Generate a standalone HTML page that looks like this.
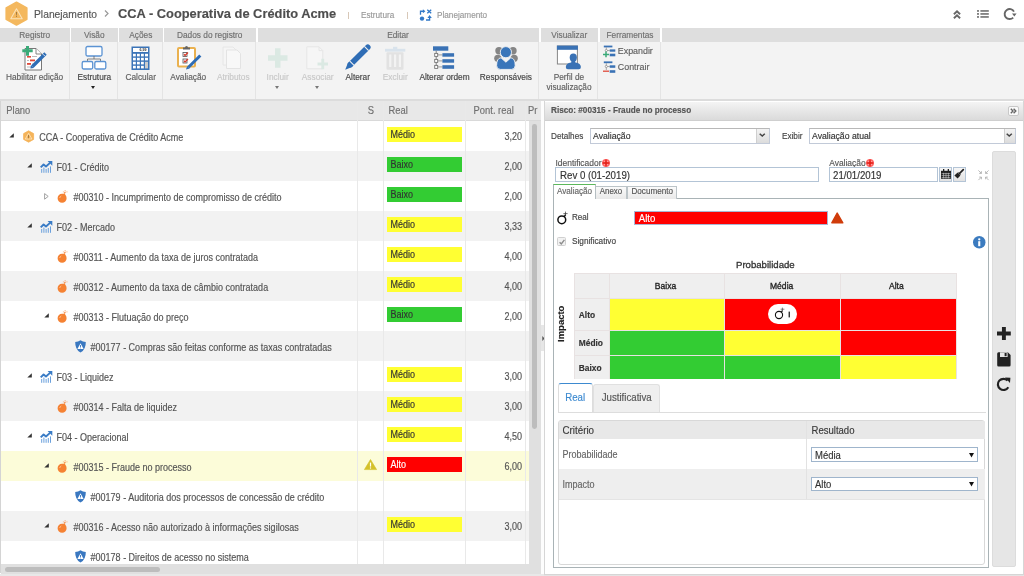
<!DOCTYPE html>
<html><head><meta charset="utf-8">
<style>
*{box-sizing:border-box;margin:0;padding:0}
html,body{width:1024px;height:576px;overflow:hidden;background:#fff;font-family:"Liberation Sans",sans-serif;color:#555}
body{will-change:transform}
.t,.tt,.lbl,.rh,.bdg{-webkit-text-stroke:0.15px currentColor}
.a{position:absolute}
.t{position:absolute;white-space:nowrap;line-height:1;transform:scaleY(1.12);transform-origin:0 85%}
.tt{transform:scaleY(1.12);transform-origin:0 85%}
.lbl{transform:scaleY(1.12);transform-origin:0 85%}
.bdg span,.rh span{display:inline-block;transform:scaleY(1.12);transform-origin:0 85%}
svg{position:absolute;overflow:visible}
/* ribbon */
.rh{position:absolute;top:28px;height:14px;background:#dedede;color:#6f6f6f;font-size:8.3px;text-align:center;line-height:14px}
.rb{position:absolute;top:42px;height:57px;background:#f3f3f3}
.sep{position:absolute;top:42px;height:57px;width:1px;background:#e4e4e4}
.lbl{position:absolute;font-size:8.3px;margin-top:-0.6px;color:#5e5e5e;white-space:nowrap;line-height:1;text-align:center}
.dis{color:#c8c8c8}
.dd{position:absolute;width:0;height:0;border-left:2.5px solid transparent;border-right:2.5px solid transparent;border-top:3px solid #222}
/* tree */
.row{position:absolute;left:1px;width:528px;height:30px}
.cl{position:absolute;top:101px;width:1px;height:463px;background:#e6e6e6}
.tt{position:absolute;font-size:9px;color:#545454;white-space:nowrap;line-height:1}
.bdg{position:absolute;left:387.4px;width:74.6px;height:15px;font-size:9px;line-height:15px;padding-left:3px;padding-top:0.8px;color:#333}
.num{position:absolute;right:8px;font-size:9px;color:#555;line-height:1}
</style></head><body>

<!-- ===== TOP BAR ===== -->
<svg style="left:5px;top:1px" width="23" height="25" viewBox="0 0 23 25">
  <polygon points="11.5,1.2 21.8,7 21.8,18.2 11.5,24 1.2,18.2 1.2,7" fill="#f4b85e" stroke="#f4b85e" stroke-width="1.6" stroke-linejoin="round"/>
  <path d="M11.5 7.8 L17.2 17.8 L5.8 17.8 Z" fill="none" stroke="#fae2b8" stroke-width="1.1" stroke-linejoin="round"/>
  <rect x="11.05" y="11" width="0.9" height="2.8" fill="#9a7440"/>
  <rect x="11.05" y="14.6" width="0.9" height="1.3" fill="#9a7440"/>
</svg>
<div class="t" style="left:34px;top:10px;font-size:10.3px;color:#555;transform:scaleY(1.04)">Planejamento</div>
<svg style="left:104px;top:9.6px" width="5" height="7"><path d="M1 0.5 L4 3.5 L1 6.5" fill="none" stroke="#999" stroke-width="1.2"/></svg>
<div class="t" style="left:118px;top:8px;font-size:12.85px;font-weight:bold;color:#4e4e4e;transform:none">CCA - Cooperativa de Crédito Acme</div>
<div class="a" style="left:348px;top:12px;width:1px;height:7px;background:#d8c8b8"></div>
<div class="t" style="left:361px;top:12px;font-size:8.2px;color:#999">Estrutura</div>
<div class="a" style="left:407px;top:12px;width:1px;height:7px;background:#d8c8b8"></div>
<svg style="left:410px;top:5px" width="30" height="20" viewBox="0 0 30 20">
  <path d="M10.5 9.8 V6.25 H13.4" fill="none" stroke="#3078c8" stroke-width="1.3"/>
  <path d="M12.9 4.3 L15.4 6.25 L12.9 8.2 Z" fill="#3078c8"/>
  <path d="M17.3 4.7 L21.2 8.2 M21.2 4.7 L17.3 8.2" stroke="#3078c8" stroke-width="1.3"/>
  <circle cx="12" cy="13.6" r="2.2" fill="#3078c8"/>
  <path d="M16 15 H19.6 V12.2" fill="none" stroke="#3078c8" stroke-width="1.3"/>
  <path d="M17.4 12.9 L19.6 10.1 L21.8 12.9 Z" fill="#3078c8"/>
</svg>
<div class="t" style="left:437px;top:12px;font-size:8.2px;color:#999">Planejamento</div>
<!-- right icons -->
<svg style="left:953px;top:9.5px" width="8" height="9" viewBox="0 0 8 9">
  <path d="M0.9 4.3 L4 1.4 L7.1 4.3 M0.9 8.3 L4 5.4 L7.1 8.3" fill="none" stroke="#666" stroke-width="1.9"/>
</svg>
<svg style="left:977px;top:10px" width="12" height="8" viewBox="0 0 12 8">
  <rect x="0" y="0.2" width="2" height="1.5" fill="#666"/><rect x="3.4" y="0.2" width="8.4" height="1.5" fill="#666"/>
  <rect x="0" y="3.2" width="2" height="1.5" fill="#666"/><rect x="3.4" y="3.2" width="8.4" height="1.5" fill="#666"/>
  <rect x="0" y="6.2" width="2" height="1.5" fill="#666"/><rect x="3.4" y="6.2" width="8.4" height="1.5" fill="#666"/>
</svg>
<svg style="left:1003px;top:8px" width="14" height="12" viewBox="0 0 14 12">
  <path d="M11 3.6 A5 5 0 1 0 10.2 9.6" fill="none" stroke="#666" stroke-width="1.9"/>
  <path d="M9 5.4 L13.6 5.4 L11.3 8.4 Z" fill="#666"/>
</svg>

<!-- ===== RIBBON ===== -->
<div class="rb" style="left:0;width:1024px"></div>
<div class="rh" style="left:0;width:69.5px"><span>Registro</span></div>
<div class="rh" style="left:71px;width:46.5px"><span>Visão</span></div>
<div class="rh" style="left:119px;width:43.5px"><span>Ações</span></div>
<div class="rh" style="left:164px;width:91.5px"><span>Dados do registro</span></div>
<div class="rh" style="left:257.5px;width:281px"><span>Editar</span></div>
<div class="rh" style="left:541px;width:56.5px"><span>Visualizar</span></div>
<div class="rh" style="left:600px;width:60px"><span>Ferramentas</span></div>
<div class="rh" style="left:662px;width:362px"></div>
<div class="sep" style="left:69px"></div>
<div class="sep" style="left:117px"></div>
<div class="sep" style="left:162px"></div>
<div class="sep" style="left:255px"></div>
<div class="sep" style="left:538px"></div>
<div class="sep" style="left:597px"></div>
<div class="sep" style="left:660px"></div>
<div class="a" style="left:0;top:99px;width:1024px;height:2px;background:#dcdcdc"></div>

<!-- ribbon labels -->
<div class="lbl" style="left:6px;top:73.5px">Habilitar edição</div>
<div class="lbl" style="left:77.5px;top:73.5px;color:#444">Estrutura</div>
<div class="dd" style="left:90.8px;top:86px"></div>
<div class="lbl" style="left:125.5px;top:73.5px">Calcular</div>
<div class="lbl" style="left:170.3px;top:73.5px">Avaliação</div>
<div class="lbl dis" style="left:216.9px;top:73.5px">Atributos</div>
<div class="lbl dis" style="left:266.6px;top:73.5px">Incluir</div>
<div class="dd" style="left:274.5px;top:86px;border-top-color:#777"></div>
<div class="lbl dis" style="left:301.8px;top:73.5px">Associar</div>
<div class="dd" style="left:314.5px;top:86px;border-top-color:#777"></div>
<div class="lbl" style="left:345.5px;top:73.5px;color:#444">Alterar</div>
<div class="lbl dis" style="left:382.8px;top:73.5px">Excluir</div>
<div class="lbl" style="left:419.4px;top:73.5px;color:#444">Alterar ordem</div>
<div class="lbl" style="left:479.8px;top:73.5px;color:#444">Responsáveis</div>
<div class="lbl" style="left:546.4px;top:74.5px;width:45px;line-height:9.4px">Perfil de<br>visualização</div>
<div class="lbl" style="left:617.8px;top:47.2px;font-size:8.9px">Expandir</div>
<div class="lbl" style="left:617.8px;top:63.3px;font-size:8.9px">Contrair</div>

<!-- Habilitar edicao -->
<svg style="left:22px;top:45.5px" width="25" height="25" viewBox="0 0 25 25">
  <path d="M3 2.5 H14 L19.5 8 V24 H3 Z" fill="#fff" stroke="#777" stroke-width="1"/>
  <path d="M14 2.5 V8 H19.5" fill="#fff" stroke="#777" stroke-width="0.9"/>
  <rect x="5" y="10" width="4" height="1.6" fill="#e04a3a"/><rect x="10" y="10" width="5" height="1" fill="#bbb"/>
  <rect x="8" y="13.5" width="5" height="1.8" fill="#e04a3a"/><rect x="5" y="14" width="2" height="1" fill="#bbb"/>
  <rect x="5" y="17" width="4" height="1.8" fill="#e04a3a"/><rect x="10" y="17.5" width="4" height="1" fill="#bbb"/>
  <rect x="5" y="20.5" width="7" height="1" fill="#bbb"/>
  <path d="M0.3 4.8 H10.7 M5.5 0 V9.7" stroke="#3aaa78" stroke-width="3"/>
  <path d="M23.5 7.5 L10.5 20.5" stroke="#2f6db5" stroke-width="3.4"/>
  <path d="M22.6 6.6 L24.4 8.4" stroke="#fff" stroke-width="0.8" transform="translate(-1.6 1.6)"/>
  <path d="M9 19 L11.9 21.9 L8.4 22.6 Z" fill="#2f6db5"/>
</svg>
<!-- Estrutura -->
<svg style="left:81px;top:45px" width="26" height="25" viewBox="0 0 26 25">
  <rect x="5" y="1.5" width="16" height="9.5" rx="1.5" fill="#fff" stroke="#5b93d3" stroke-width="1.3"/>
  <path d="M13 11 V14 M6.5 16 V14 H19.5 V16" fill="none" stroke="#666" stroke-width="0.8"/>
  <rect x="1.2" y="16.5" width="10.5" height="7.5" rx="1.5" fill="#fff" stroke="#5b93d3" stroke-width="1.3"/>
  <rect x="13.8" y="16.5" width="11" height="7.5" rx="1.5" fill="#fff" stroke="#5b93d3" stroke-width="1.3"/>
</svg>
<!-- Calcular -->
<svg style="left:130.5px;top:45.5px" width="19" height="25" viewBox="0 0 19 25">
  <rect x="0.5" y="0.5" width="18" height="23.5" fill="#3b74b8"/>
  <rect x="2" y="2" width="15" height="4" fill="#fff"/>
  <text x="15.5" y="5.4" font-size="3.6" font-family="Liberation Sans" font-weight="bold" fill="#333" text-anchor="end">6,99</text>
  <g fill="#fff">
  <rect x="2" y="7.8" width="2.8" height="2.6"/><rect x="6" y="7.8" width="2.8" height="2.6"/><rect x="10" y="7.8" width="2.8" height="2.6"/><rect x="14" y="7.8" width="3" height="2.6"/>
  <rect x="2" y="11.8" width="2.8" height="2.6"/><rect x="6" y="11.8" width="2.8" height="2.6"/><rect x="10" y="11.8" width="2.8" height="2.6"/><rect x="14" y="11.8" width="3" height="2.6"/>
  <rect x="2" y="15.8" width="2.8" height="2.6"/><rect x="6" y="15.8" width="2.8" height="2.6"/><rect x="10" y="15.8" width="2.8" height="2.6"/>
  <rect x="2" y="19.8" width="2.8" height="2.6"/><rect x="6" y="19.8" width="2.8" height="2.6"/><rect x="10" y="19.8" width="2.8" height="2.6"/>
  </g>
  <rect x="14" y="15.8" width="3" height="6.6" fill="#ccc"/>
</svg>
<!-- Avaliacao -->
<svg style="left:176.5px;top:45px" width="25" height="25" viewBox="0 0 25 25">
  <rect x="1" y="3" width="17" height="18.5" rx="1" fill="#fff" stroke="#eab14f" stroke-width="2"/>
  <path d="M6 4.5 V2.5 H8 A1.5 1.5 0 0 1 11 2.5 H13 V4.5 Z" fill="#666"/>
  <rect x="6" y="7.5" width="4" height="4" fill="#fff" stroke="#555" stroke-width="0.8"/>
  <path d="M7 9.2 L8 10.5 L11 7.5" fill="none" stroke="#d93a2a" stroke-width="1.2"/>
  <rect x="6" y="14" width="4" height="4" fill="#fff" stroke="#555" stroke-width="0.8"/>
  <path d="M7 15.7 L8 17 L11 14" fill="none" stroke="#d93a2a" stroke-width="1.2"/>
  <path d="M23.3 10.5 L11.5 22.3" stroke="#2f6db5" stroke-width="3"/>
  <path d="M10.2 21 L12.8 23.6 L9 24.5 Z" fill="#2f6db5"/>
</svg>
<!-- Atributos (disabled) -->
<svg style="left:222px;top:46px" width="20" height="23" viewBox="0 0 20 23">
  <path d="M1 1 H11 L14 4 V19 H1 Z" fill="#f5f5f5" stroke="#e6e6e6" stroke-width="1"/>
  <path d="M4.5 4 H15 L18.5 7.5 V22.5 H4.5 Z" fill="#f8f8f8" stroke="#e3e3e3" stroke-width="1"/>
</svg>
<!-- Incluir (disabled plus) -->
<svg style="left:267.5px;top:47.5px" width="20" height="20" viewBox="0 0 20 20">
  <path d="M0 10 H19.5 M9.75 0.3 V19.7" stroke="#dbe9e3" stroke-width="5.5"/>
</svg>
<!-- Associar (disabled) -->
<svg style="left:306px;top:45.5px" width="23" height="24" viewBox="0 0 23 24">
  <path d="M0.8 0.8 H13 L16.8 4.6 V22.8 H0.8 Z" fill="#f6f6f6" stroke="#e6e6e6" stroke-width="1"/>
  <path d="M13 0.8 V4.6 H16.8" fill="none" stroke="#e6e6e6" stroke-width="1"/>
  <path d="M11.5 18 H22 M16.75 12.8 V23.3" stroke="#dbe9e3" stroke-width="2.8"/>
</svg>
<!-- Alterar (pencil) -->
<svg style="left:345px;top:45px" width="25" height="25" viewBox="0 0 25 25">
  <path d="M22.8 2.2 L5.4 19.6" stroke="#2f6db5" stroke-width="5.6" stroke-linecap="round"/>
  <path d="M19.4 1.4 L23.6 5.6" stroke="#f3f3f3" stroke-width="1.1"/>
  <path d="M3.2 17.2 L7.8 21.8 L0.2 24.8 Z" fill="#2f6db5"/>
  <path d="M4.8 16.2 L8.8 20.2" stroke="#f3f3f3" stroke-width="1.1"/>
</svg>
<!-- Excluir (disabled trash) -->
<svg style="left:384.5px;top:45.5px" width="21" height="24" viewBox="0 0 21 24">
  <rect x="0" y="2.8" width="20.3" height="2.8" fill="#d9e3ec"/>
  <rect x="8" y="0.8" width="4.3" height="2.5" fill="#d9e3ec"/>
  <rect x="1.5" y="6.2" width="17" height="17.6" rx="1" fill="#e2e2e2"/>
  <rect x="4.2" y="8.5" width="2.2" height="12.5" fill="#f3f3f3"/>
  <rect x="9" y="8.5" width="2.2" height="12.5" fill="#f3f3f3"/>
  <rect x="13.8" y="8.5" width="2.2" height="12.5" fill="#f3f3f3"/>
</svg>
<!-- Alterar ordem -->
<svg style="left:432.5px;top:46px" width="22" height="24" viewBox="0 0 22 24">
  <rect x="0" y="0.3" width="15.3" height="4.4" fill="#3a72b5"/>
  <path d="M3.2 4.7 V21" stroke="#777" stroke-width="0.9"/>
  <g fill="#fff" stroke="#777" stroke-width="0.9">
   <rect x="1.7" y="7.4" width="3" height="3"/><rect x="1.7" y="13.4" width="3" height="3"/><rect x="1.7" y="19.4" width="3" height="3"/>
  </g>
  <path d="M4.7 8.9 H9.5 M4.7 14.9 H9.5 M4.7 20.9 H9.5" stroke="#777" stroke-width="0.7"/>
  <rect x="9.4" y="7.2" width="11.7" height="3.5" fill="#3a72b5"/>
  <rect x="9.4" y="13.2" width="11.7" height="3.5" fill="#3a72b5"/>
  <rect x="9.4" y="19.2" width="11.7" height="3.6" fill="#3a72b5"/>
</svg>
<!-- Responsaveis -->
<svg style="left:490px;top:42px" width="32" height="30" viewBox="0 0 32 30">
  <circle cx="9" cy="8.7" r="3.7" fill="#858585"/>
  <circle cx="23" cy="8.7" r="3.7" fill="#858585"/>
  <ellipse cx="7.8" cy="16.3" rx="3.6" ry="3.6" fill="#858585"/>
  <ellipse cx="24.2" cy="16.3" rx="3.6" ry="3.6" fill="#858585"/>
  <circle cx="15.9" cy="10.2" r="5.6" fill="#3a76ba" stroke="#f3f3f3" stroke-width="0.9"/>
  <path d="M6.6 23.5 Q6.6 16.2 11 15.8 L15.9 20.2 L20.8 15.8 Q25.2 16.2 25.2 23.5 Q25.2 27.4 21.5 27.4 H10.3 Q6.6 27.4 6.6 23.5 Z" fill="#3a76ba" stroke="#f3f3f3" stroke-width="0.9"/>
</svg>
<!-- Perfil de visualizacao -->
<svg style="left:552px;top:42px" width="32" height="30" viewBox="0 0 32 30">
  <rect x="5.4" y="4" width="20" height="18" fill="#fff" stroke="#858585" stroke-width="1"/>
  <rect x="4.9" y="3.6" width="21" height="4.2" fill="#3a72b5"/>
  <ellipse cx="21.3" cy="15.6" rx="3.6" ry="4.2" fill="#3a72b5"/>
  <path d="M19.6 18.5 L23 18.5 L23.4 20.4 Q28.9 21.2 28.9 25 Q28.9 27.3 26.8 27.3 H15.9 Q13.8 27.3 13.8 25 Q13.8 21.2 19.2 20.4 Z" fill="#3a72b5"/>
</svg>
<!-- Expandir -->
<svg style="left:602.5px;top:44.5px" width="13" height="13" viewBox="0 0 13 13">
  <rect x="0.8" y="0.6" width="8.6" height="1.8" fill="#3a72b5"/>
  <rect x="6.7" y="4.4" width="5.6" height="2.3" fill="#3a72b5"/>
  <rect x="6.7" y="8.7" width="5.6" height="2.6" fill="#3a72b5"/>
  <circle cx="3.3" cy="5.5" r="1.1" fill="#fff" stroke="#777" stroke-width="0.6"/>
  <path d="M3.3 2.4 V4.4 M4.4 5.5 H6.7" stroke="#777" stroke-width="0.6"/>
  <path d="M0 9.6 H6 M3 6.6 V12.3" stroke="#3aaa78" stroke-width="1.5"/>
</svg>
<!-- Contrair -->
<svg style="left:602.5px;top:61px" width="13" height="13" viewBox="0 0 13 13">
  <rect x="0.8" y="0.4" width="8.6" height="1.8" fill="#3a72b5"/>
  <rect x="6.7" y="4.3" width="5.6" height="2.5" fill="#3a72b5"/>
  <rect x="6.7" y="9.2" width="5.6" height="2.6" fill="#3a72b5"/>
  <circle cx="3.3" cy="5.5" r="1.1" fill="#fff" stroke="#777" stroke-width="0.6"/>
  <path d="M3.3 2.2 V4.4 M4.4 5.5 H6.7 M3.3 6.6 V9" stroke="#777" stroke-width="0.6"/>
  <path d="M0 10.2 H6" stroke="#e04a3a" stroke-width="1.3"/>
</svg>


<!-- ===== LEFT TREE ===== -->
<div class="a" style="left:0;top:101px;width:541px;height:472px;background:#fff;border-left:1px solid #d4d4d4"></div>
<!-- TREE_START -->
<div class="a" style="left:1px;top:101px;width:540px;height:20px;background:#e8e8e8;border-bottom:1px solid #d9d9d9"></div>
<div class="t" style="left:6.3px;top:106px;font-size:9.4px;color:#707070">Plano</div>
<div class="t" style="left:367.8px;top:106px;font-size:9.4px;color:#707070">S</div>
<div class="t" style="left:388.6px;top:106px;font-size:9.4px;color:#707070">Real</div>
<div class="t" style="left:473.6px;top:106px;font-size:9.4px;color:#707070">Pont. real</div>
<div class="t" style="left:528px;top:106px;font-size:9.4px;color:#707070">Pr</div>
<div class="a" style="left:1px;top:121px;width:528px;height:30px;background:#fff"></div>
<svg style="left:9.3px;top:132.8px" width="5" height="5" viewBox="0 0 5 5"><path d="M4.8 0.2 V4.6 H0.3 Z" fill="#333"/></svg>
<svg style="left:23.0px;top:130px" width="12" height="13" viewBox="0 0 12 13"><polygon points="5.6,0.8 10.6,3.6 10.6,9.4 5.6,12.2 0.6,9.4 0.6,3.6" fill="#f5b45a" stroke="#f5b45a" stroke-width="0.8" stroke-linejoin="round"/><path d="M5.6 3.2 L8.9 9 H2.3 Z" fill="none" stroke="#fbe1b8" stroke-width="0.9" stroke-linejoin="round"/><rect x="5.2" y="5.2" width="0.8" height="1.6" fill="#7a5a30"/><rect x="5.2" y="7.3" width="0.8" height="0.9" fill="#7a5a30"/></svg>
<div class="tt" style="left:39.3px;top:133.6px">CCA - Cooperativa de Crédito Acme</div>
<div class="bdg" style="top:127px;background:#ffff33;color:#333"><span>Médio</span></div>
<div class="tt" style="left:490.6px;width:31.5px;text-align:right;top:133.0px">3,20</div>
<div class="a" style="left:1px;top:151px;width:528px;height:30px;background:#f2f2f2"></div>
<svg style="left:26.6px;top:162.8px" width="5" height="5" viewBox="0 0 5 5"><path d="M4.8 0.2 V4.6 H0.3 Z" fill="#333"/></svg>
<svg style="left:40.1px;top:161px" width="13" height="12" viewBox="0 0 13 12"><path d="M0.7 6.4 L3.6 3.5 L6 5.5 L10 1.9" fill="none" stroke="#3a7cc6" stroke-width="1.9" stroke-linejoin="round"/><path d="M7.6 0 H12.3 V4.7 Z" fill="#3a7cc6"/><g fill="#6aa0dc"><rect x="1.2" y="8" width="1" height="3.8"/><rect x="3.4" y="6.6" width="1" height="5.2"/><rect x="5.6" y="8" width="1" height="3.8"/><rect x="7.8" y="7" width="1" height="4.8"/><rect x="10" y="5.4" width="1" height="6.4"/></g></svg>
<div class="tt" style="left:56.4px;top:163.6px">F01 - Crédito</div>
<div class="bdg" style="top:157px;background:#33cc33;color:#333"><span>Baixo</span></div>
<div class="tt" style="left:490.6px;width:31.5px;text-align:right;top:163.0px">2,00</div>
<div class="a" style="left:1px;top:181px;width:528px;height:30px;background:#fff"></div>
<svg style="left:44px;top:192.5px" width="5" height="7" viewBox="0 0 5 7"><path d="M0.6 0.6 L4.2 3.4 L0.6 6.2 Z" fill="none" stroke="#999" stroke-width="0.9"/></svg>
<svg style="left:57.0px;top:190px" width="12" height="13" viewBox="0 0 12 13"><path d="M8.2 4.6 Q9.6 6.2 9.6 8.2 A4.5 4.5 0 1 1 5.1 3.7 Q6.6 3.8 7.6 3.2 Q8 4 8.2 4.6 Z" fill="#f58233"/><path d="M7.5 3.4 Q8.1 2.6 8.1 1.8" fill="none" stroke="#f58233" stroke-width="1.2"/><path d="M2.7 8 Q3 6.5 4.3 5.9" fill="none" stroke="#fcd0b0" stroke-width="0.7"/><g fill="#f9a46a"><rect x="7.7" y="0" width="0.8" height="1.1"/><rect x="9.4" y="1.5" width="1.1" height="0.8"/><rect x="5.9" y="1.5" width="1" height="0.8"/></g></svg>
<div class="tt" style="left:73.5px;top:193.6px">#00310 - Incumprimento de compromisso de crédito</div>
<div class="bdg" style="top:187px;background:#33cc33;color:#333"><span>Baixo</span></div>
<div class="tt" style="left:490.6px;width:31.5px;text-align:right;top:193.0px">2,00</div>
<div class="a" style="left:1px;top:211px;width:528px;height:30px;background:#f2f2f2"></div>
<svg style="left:26.6px;top:222.8px" width="5" height="5" viewBox="0 0 5 5"><path d="M4.8 0.2 V4.6 H0.3 Z" fill="#333"/></svg>
<svg style="left:40.1px;top:221px" width="13" height="12" viewBox="0 0 13 12"><path d="M0.7 6.4 L3.6 3.5 L6 5.5 L10 1.9" fill="none" stroke="#3a7cc6" stroke-width="1.9" stroke-linejoin="round"/><path d="M7.6 0 H12.3 V4.7 Z" fill="#3a7cc6"/><g fill="#6aa0dc"><rect x="1.2" y="8" width="1" height="3.8"/><rect x="3.4" y="6.6" width="1" height="5.2"/><rect x="5.6" y="8" width="1" height="3.8"/><rect x="7.8" y="7" width="1" height="4.8"/><rect x="10" y="5.4" width="1" height="6.4"/></g></svg>
<div class="tt" style="left:56.4px;top:223.6px">F02 - Mercado</div>
<div class="bdg" style="top:217px;background:#ffff33;color:#333"><span>Médio</span></div>
<div class="tt" style="left:490.6px;width:31.5px;text-align:right;top:223.0px">3,33</div>
<div class="a" style="left:1px;top:241px;width:528px;height:30px;background:#fff"></div>
<svg style="left:57.0px;top:250px" width="12" height="13" viewBox="0 0 12 13"><path d="M8.2 4.6 Q9.6 6.2 9.6 8.2 A4.5 4.5 0 1 1 5.1 3.7 Q6.6 3.8 7.6 3.2 Q8 4 8.2 4.6 Z" fill="#f58233"/><path d="M7.5 3.4 Q8.1 2.6 8.1 1.8" fill="none" stroke="#f58233" stroke-width="1.2"/><path d="M2.7 8 Q3 6.5 4.3 5.9" fill="none" stroke="#fcd0b0" stroke-width="0.7"/><g fill="#f9a46a"><rect x="7.7" y="0" width="0.8" height="1.1"/><rect x="9.4" y="1.5" width="1.1" height="0.8"/><rect x="5.9" y="1.5" width="1" height="0.8"/></g></svg>
<div class="tt" style="left:73.5px;top:253.6px">#00311 - Aumento da taxa de juros contratada</div>
<div class="bdg" style="top:247px;background:#ffff33;color:#333"><span>Médio</span></div>
<div class="tt" style="left:490.6px;width:31.5px;text-align:right;top:253.0px">4,00</div>
<div class="a" style="left:1px;top:271px;width:528px;height:30px;background:#f2f2f2"></div>
<svg style="left:57.0px;top:280px" width="12" height="13" viewBox="0 0 12 13"><path d="M8.2 4.6 Q9.6 6.2 9.6 8.2 A4.5 4.5 0 1 1 5.1 3.7 Q6.6 3.8 7.6 3.2 Q8 4 8.2 4.6 Z" fill="#f58233"/><path d="M7.5 3.4 Q8.1 2.6 8.1 1.8" fill="none" stroke="#f58233" stroke-width="1.2"/><path d="M2.7 8 Q3 6.5 4.3 5.9" fill="none" stroke="#fcd0b0" stroke-width="0.7"/><g fill="#f9a46a"><rect x="7.7" y="0" width="0.8" height="1.1"/><rect x="9.4" y="1.5" width="1.1" height="0.8"/><rect x="5.9" y="1.5" width="1" height="0.8"/></g></svg>
<div class="tt" style="left:73.5px;top:283.6px">#00312 - Aumento da taxa de câmbio contratada</div>
<div class="bdg" style="top:277px;background:#ffff33;color:#333"><span>Médio</span></div>
<div class="tt" style="left:490.6px;width:31.5px;text-align:right;top:283.0px">4,00</div>
<div class="a" style="left:1px;top:301px;width:528px;height:30px;background:#fff"></div>
<svg style="left:43.9px;top:312.8px" width="5" height="5" viewBox="0 0 5 5"><path d="M4.8 0.2 V4.6 H0.3 Z" fill="#333"/></svg>
<svg style="left:57.0px;top:310px" width="12" height="13" viewBox="0 0 12 13"><path d="M8.2 4.6 Q9.6 6.2 9.6 8.2 A4.5 4.5 0 1 1 5.1 3.7 Q6.6 3.8 7.6 3.2 Q8 4 8.2 4.6 Z" fill="#f58233"/><path d="M7.5 3.4 Q8.1 2.6 8.1 1.8" fill="none" stroke="#f58233" stroke-width="1.2"/><path d="M2.7 8 Q3 6.5 4.3 5.9" fill="none" stroke="#fcd0b0" stroke-width="0.7"/><g fill="#f9a46a"><rect x="7.7" y="0" width="0.8" height="1.1"/><rect x="9.4" y="1.5" width="1.1" height="0.8"/><rect x="5.9" y="1.5" width="1" height="0.8"/></g></svg>
<div class="tt" style="left:73.5px;top:313.6px">#00313 - Flutuação do preço</div>
<div class="bdg" style="top:307px;background:#33cc33;color:#333"><span>Baixo</span></div>
<div class="tt" style="left:490.6px;width:31.5px;text-align:right;top:313.0px">2,00</div>
<div class="a" style="left:1px;top:331px;width:528px;height:30px;background:#f2f2f2"></div>
<svg style="left:74.6px;top:340.2px" width="11" height="13" viewBox="0 0 11 13"><path d="M5.5 0.2 Q7.8 1.8 10.8 1.9 Q11 9.3 5.5 12.6 Q0 9.3 0.2 1.9 Q3.2 1.8 5.5 0.2 Z" fill="#3a78c0"/><path d="M5.5 3.3 L8.6 8.9 H2.4 Z" fill="#fff"/><rect x="5.05" y="5" width="0.9" height="2" fill="#3a78c0"/><rect x="5.05" y="7.5" width="0.9" height="0.8" fill="#3a78c0"/></svg>
<div class="tt" style="left:90.6px;top:343.6px">#00177 - Compras são feitas conforme as taxas contratadas</div>
<div class="a" style="left:1px;top:361px;width:528px;height:30px;background:#fff"></div>
<svg style="left:26.6px;top:372.8px" width="5" height="5" viewBox="0 0 5 5"><path d="M4.8 0.2 V4.6 H0.3 Z" fill="#333"/></svg>
<svg style="left:40.1px;top:371px" width="13" height="12" viewBox="0 0 13 12"><path d="M0.7 6.4 L3.6 3.5 L6 5.5 L10 1.9" fill="none" stroke="#3a7cc6" stroke-width="1.9" stroke-linejoin="round"/><path d="M7.6 0 H12.3 V4.7 Z" fill="#3a7cc6"/><g fill="#6aa0dc"><rect x="1.2" y="8" width="1" height="3.8"/><rect x="3.4" y="6.6" width="1" height="5.2"/><rect x="5.6" y="8" width="1" height="3.8"/><rect x="7.8" y="7" width="1" height="4.8"/><rect x="10" y="5.4" width="1" height="6.4"/></g></svg>
<div class="tt" style="left:56.4px;top:373.6px">F03 - Liquidez</div>
<div class="bdg" style="top:367px;background:#ffff33;color:#333"><span>Médio</span></div>
<div class="tt" style="left:490.6px;width:31.5px;text-align:right;top:373.0px">3,00</div>
<div class="a" style="left:1px;top:391px;width:528px;height:30px;background:#f2f2f2"></div>
<svg style="left:57.0px;top:400px" width="12" height="13" viewBox="0 0 12 13"><path d="M8.2 4.6 Q9.6 6.2 9.6 8.2 A4.5 4.5 0 1 1 5.1 3.7 Q6.6 3.8 7.6 3.2 Q8 4 8.2 4.6 Z" fill="#f58233"/><path d="M7.5 3.4 Q8.1 2.6 8.1 1.8" fill="none" stroke="#f58233" stroke-width="1.2"/><path d="M2.7 8 Q3 6.5 4.3 5.9" fill="none" stroke="#fcd0b0" stroke-width="0.7"/><g fill="#f9a46a"><rect x="7.7" y="0" width="0.8" height="1.1"/><rect x="9.4" y="1.5" width="1.1" height="0.8"/><rect x="5.9" y="1.5" width="1" height="0.8"/></g></svg>
<div class="tt" style="left:73.5px;top:403.6px">#00314 - Falta de liquidez</div>
<div class="bdg" style="top:397px;background:#ffff33;color:#333"><span>Médio</span></div>
<div class="tt" style="left:490.6px;width:31.5px;text-align:right;top:403.0px">3,00</div>
<div class="a" style="left:1px;top:421px;width:528px;height:30px;background:#fff"></div>
<svg style="left:26.6px;top:432.8px" width="5" height="5" viewBox="0 0 5 5"><path d="M4.8 0.2 V4.6 H0.3 Z" fill="#333"/></svg>
<svg style="left:40.1px;top:431px" width="13" height="12" viewBox="0 0 13 12"><path d="M0.7 6.4 L3.6 3.5 L6 5.5 L10 1.9" fill="none" stroke="#3a7cc6" stroke-width="1.9" stroke-linejoin="round"/><path d="M7.6 0 H12.3 V4.7 Z" fill="#3a7cc6"/><g fill="#6aa0dc"><rect x="1.2" y="8" width="1" height="3.8"/><rect x="3.4" y="6.6" width="1" height="5.2"/><rect x="5.6" y="8" width="1" height="3.8"/><rect x="7.8" y="7" width="1" height="4.8"/><rect x="10" y="5.4" width="1" height="6.4"/></g></svg>
<div class="tt" style="left:56.4px;top:433.6px">F04 - Operacional</div>
<div class="bdg" style="top:427px;background:#ffff33;color:#333"><span>Médio</span></div>
<div class="tt" style="left:490.6px;width:31.5px;text-align:right;top:433.0px">4,50</div>
<div class="a" style="left:1px;top:451px;width:528px;height:30px;background:#fcfcd9"></div>
<svg style="left:43.9px;top:462.8px" width="5" height="5" viewBox="0 0 5 5"><path d="M4.8 0.2 V4.6 H0.3 Z" fill="#333"/></svg>
<svg style="left:57.0px;top:460px" width="12" height="13" viewBox="0 0 12 13"><path d="M8.2 4.6 Q9.6 6.2 9.6 8.2 A4.5 4.5 0 1 1 5.1 3.7 Q6.6 3.8 7.6 3.2 Q8 4 8.2 4.6 Z" fill="#f58233"/><path d="M7.5 3.4 Q8.1 2.6 8.1 1.8" fill="none" stroke="#f58233" stroke-width="1.2"/><path d="M2.7 8 Q3 6.5 4.3 5.9" fill="none" stroke="#fcd0b0" stroke-width="0.7"/><g fill="#f9a46a"><rect x="7.7" y="0" width="0.8" height="1.1"/><rect x="9.4" y="1.5" width="1.1" height="0.8"/><rect x="5.9" y="1.5" width="1" height="0.8"/></g></svg>
<div class="tt" style="left:73.5px;top:463.6px">#00315 - Fraude no processo</div>
<div class="bdg" style="top:457px;background:#ff0000;color:#fff"><span>Alto</span></div>
<div class="tt" style="left:490.6px;width:31.5px;text-align:right;top:463.0px">6,00</div>
<svg style="left:364px;top:458.5px" width="13" height="11" viewBox="0 0 13 11"><path d="M6.5 0.5 L12.6 10.6 H0.4 Z" fill="#d4c12a" stroke="#d4c12a" stroke-width="0.6" stroke-linejoin="round"/><rect x="5.9" y="3.6" width="1.2" height="4" fill="#fff"/><rect x="5.9" y="8.4" width="1.2" height="1.2" fill="#fff"/></svg>
<div class="a" style="left:1px;top:481px;width:528px;height:30px;background:#fff"></div>
<svg style="left:74.6px;top:490.2px" width="11" height="13" viewBox="0 0 11 13"><path d="M5.5 0.2 Q7.8 1.8 10.8 1.9 Q11 9.3 5.5 12.6 Q0 9.3 0.2 1.9 Q3.2 1.8 5.5 0.2 Z" fill="#3a78c0"/><path d="M5.5 3.3 L8.6 8.9 H2.4 Z" fill="#fff"/><rect x="5.05" y="5" width="0.9" height="2" fill="#3a78c0"/><rect x="5.05" y="7.5" width="0.9" height="0.8" fill="#3a78c0"/></svg>
<div class="tt" style="left:90.6px;top:493.6px">#00179 - Auditoria dos processos de concessão de crédito</div>
<div class="a" style="left:1px;top:511px;width:528px;height:30px;background:#f2f2f2"></div>
<svg style="left:43.9px;top:522.8px" width="5" height="5" viewBox="0 0 5 5"><path d="M4.8 0.2 V4.6 H0.3 Z" fill="#333"/></svg>
<svg style="left:57.0px;top:520px" width="12" height="13" viewBox="0 0 12 13"><path d="M8.2 4.6 Q9.6 6.2 9.6 8.2 A4.5 4.5 0 1 1 5.1 3.7 Q6.6 3.8 7.6 3.2 Q8 4 8.2 4.6 Z" fill="#f58233"/><path d="M7.5 3.4 Q8.1 2.6 8.1 1.8" fill="none" stroke="#f58233" stroke-width="1.2"/><path d="M2.7 8 Q3 6.5 4.3 5.9" fill="none" stroke="#fcd0b0" stroke-width="0.7"/><g fill="#f9a46a"><rect x="7.7" y="0" width="0.8" height="1.1"/><rect x="9.4" y="1.5" width="1.1" height="0.8"/><rect x="5.9" y="1.5" width="1" height="0.8"/></g></svg>
<div class="tt" style="left:73.5px;top:523.6px">#00316 - Acesso não autorizado à informações sigilosas</div>
<div class="bdg" style="top:517px;background:#ffff33;color:#333"><span>Médio</span></div>
<div class="tt" style="left:490.6px;width:31.5px;text-align:right;top:523.0px">3,00</div>
<div class="a" style="left:1px;top:541px;width:528px;height:23px;background:#fff"></div>
<svg style="left:74.6px;top:550.2px" width="11" height="13" viewBox="0 0 11 13"><path d="M5.5 0.2 Q7.8 1.8 10.8 1.9 Q11 9.3 5.5 12.6 Q0 9.3 0.2 1.9 Q3.2 1.8 5.5 0.2 Z" fill="#3a78c0"/><path d="M5.5 3.3 L8.6 8.9 H2.4 Z" fill="#fff"/><rect x="5.05" y="5" width="0.9" height="2" fill="#3a78c0"/><rect x="5.05" y="7.5" width="0.9" height="0.8" fill="#3a78c0"/></svg>
<div class="tt" style="left:90.6px;top:553.6px">#00178 - Direitos de acesso no sistema</div>
<div class="a" style="left:357px;top:101px;width:1px;height:463px;background:#e9e9e9"></div>
<div class="a" style="left:383px;top:101px;width:1px;height:463px;background:#e9e9e9"></div>
<div class="a" style="left:465px;top:101px;width:1px;height:463px;background:#e9e9e9"></div>
<div class="a" style="left:525px;top:101px;width:1px;height:463px;background:#e9e9e9"></div>
<div class="a" style="left:529px;top:121px;width:11.5px;height:443px;background:#e0e0e0"></div>
<div class="a" style="left:532.3px;top:123.7px;width:4.8px;height:305.6px;background:#bdbdbd;border-radius:2.4px"></div>
<div class="a" style="left:1px;top:564px;width:540px;height:9.5px;background:#e0e0e0"></div>
<div class="a" style="left:4.5px;top:567px;width:155px;height:4.5px;background:#bdbdbd;border-radius:3px"></div>
<div class="a" style="left:540.5px;top:101px;width:3.5px;height:475px;background:#fdfdfd"></div>
<div class="a" style="left:541px;top:325px;width:3px;height:26px;background:#e6e6e6"></div>
<svg style="left:541.5px;top:335.5px" width="3" height="5"><path d="M0.3 0 L2.6 2.5 L0.3 5Z" fill="#555"/></svg>
<div class="a" style="left:0;top:573.5px;width:544px;height:2.5px;background:#e8e8e8"></div>
<!-- TREE_END -->

<!-- ===== RIGHT PANEL ===== -->
<!-- PANEL_START -->
<!-- panel frame -->
<div class="a" style="left:544px;top:101px;width:479.5px;height:474px;background:#fff;border:1px solid #d6d6d6;border-top:none"></div>
<div class="a" style="left:544.5px;top:101.5px;width:478px;height:19px;background:linear-gradient(#f4f4f4,#dadada);border-bottom:1px solid #cfcfcf"></div>
<div class="t" style="left:551px;top:107px;font-size:8.2px;font-weight:bold;color:#555">Risco: #00315 - Fraude no processo</div>
<div class="a" style="left:1007.5px;top:106px;width:11px;height:10px;background:#fafafa;border:1px solid #c8c8c8;border-radius:2px"></div>
<svg style="left:1009.8px;top:107.8px" width="7" height="6" viewBox="0 0 7 6"><path d="M0.8 0.7 L3 3 L0.8 5.3 M3.6 0.7 L5.8 3 L3.6 5.3" fill="none" stroke="#666" stroke-width="1.4"/></svg>

<!-- Detalhes / Exibir -->
<div class="t" style="left:551px;top:133px;font-size:8.2px;color:#444">Detalhes</div>
<div class="a" style="left:590px;top:127.5px;width:179.5px;height:16.2px;border:1px solid #c2cad8;border-top-color:#b8b8b8;background:#fff"></div>
<div class="t" style="left:593px;top:131.5px;font-size:8.7px;color:#333">Avaliação</div>
<div class="a" style="left:756.4px;top:128.5px;width:12.2px;height:14.2px;background:linear-gradient(#f3f3f3,#dcdcdc);border-left:1px solid #cfcfcf"></div>
<svg style="left:759.3px;top:132.8px" width="6.5" height="4" viewBox="0 0 6.5 4"><path d="M0.7 0.7 L3.25 3 L5.8 0.7" fill="none" stroke="#444" stroke-width="1.5"/></svg>
<div class="t" style="left:782px;top:133px;font-size:8.2px;color:#444">Exibir</div>
<div class="a" style="left:809px;top:127.5px;width:207.3px;height:16.2px;border:1px solid #c2cad8;border-top-color:#b8b8b8;background:#fff"></div>
<div class="t" style="left:812px;top:131.5px;font-size:8.7px;color:#333">Avaliação atual</div>
<div class="a" style="left:1003.5px;top:128.5px;width:11.8px;height:14.2px;background:linear-gradient(#f3f3f3,#dcdcdc);border-left:1px solid #cfcfcf"></div>
<svg style="left:1006.3px;top:132.8px" width="6.5" height="4" viewBox="0 0 6.5 4"><path d="M0.7 0.7 L3.25 3 L5.8 0.7" fill="none" stroke="#444" stroke-width="1.5"/></svg>

<!-- Identificador / Avaliacao -->
<div class="t" style="left:555.5px;top:158.8px;font-size:8.45px;color:#555">Identificador</div>
<svg style="left:602.3px;top:158.5px" width="8" height="8" viewBox="0 0 8 8"><circle cx="4" cy="4" r="4" fill="#f66"/><path d="M2.6 2.6 L5.4 5.4 M5.4 2.6 L2.6 5.4" stroke="#fff" stroke-width="0.9"/><path d="M4 0.6 V7.4 M0.6 4 H7.4" stroke="#e2231a" stroke-width="1.3"/><circle cx="4" cy="4" r="1.2" fill="#e2231a"/></svg>
<div class="a" style="left:555.2px;top:167.2px;width:264px;height:14.8px;border:1px solid #b3c4d6;background:#fff"></div>
<div class="t" style="left:560px;top:171px;font-size:9.7px;color:#333">Rev 0 (01-2019)</div>
<div class="t" style="left:829.2px;top:158.8px;font-size:8.45px;color:#555">Avaliação</div>
<svg style="left:865.5px;top:158.5px" width="8" height="8" viewBox="0 0 8 8"><circle cx="4" cy="4" r="4" fill="#f66"/><path d="M2.6 2.6 L5.4 5.4 M5.4 2.6 L2.6 5.4" stroke="#fff" stroke-width="0.9"/><path d="M4 0.6 V7.4 M0.6 4 H7.4" stroke="#e2231a" stroke-width="1.3"/><circle cx="4" cy="4" r="1.2" fill="#e2231a"/></svg>
<div class="a" style="left:829.2px;top:167px;width:109px;height:15px;border:1px solid #b3c4d6;background:#fff"></div>
<div class="t" style="left:833px;top:171px;font-size:9.7px;color:#333">21/01/2019</div>
<div class="a" style="left:938.6px;top:167px;width:13.6px;height:15px;border:1px solid #b3c4d6;background:linear-gradient(#f6f6f6,#e2e2e2)"></div>
<svg style="left:940.9px;top:169.3px" width="10" height="10" viewBox="0 0 10 10"><rect x="0" y="1.8" width="10" height="8" fill="#222"/><rect x="2" y="0" width="1.3" height="2.6" fill="#222"/><rect x="6.7" y="0" width="1.3" height="2.6" fill="#222"/><g stroke="#ddd" stroke-width="0.55"><path d="M0.6 4.6 H9.4 M0.6 6.6 H9.4 M0.6 8.6 H9.4 M2.6 3.8 V9.4 M5 3.8 V9.4 M7.4 3.8 V9.4"/></g></svg>
<div class="a" style="left:952.9px;top:167px;width:12.8px;height:15px;border:1px solid #b3c4d6;background:linear-gradient(#f6f6f6,#e2e2e2)"></div>
<svg style="left:954.3px;top:169.3px" width="10" height="10" viewBox="0 0 10 10"><path d="M9.3 0.7 L5.6 4.4" stroke="#222" stroke-width="1.7" stroke-linecap="round"/><path d="M4.6 3.2 L6.8 5.4 L6.2 6 L4 3.8 Z" fill="#222"/><path d="M3.6 3.6 L6.4 6.4 L3.6 9.6 L0.4 6.4 Z" fill="#222"/></svg>
<svg style="left:978.3px;top:169.5px" width="11" height="10.5" viewBox="0 0 11 10.5"><g fill="none" stroke="#a8a8a8" stroke-width="0.8"><path d="M0.4 0.4 L3.4 3.4 M1.2 3.4 H3.4 V1.2"/><path d="M10.6 0.4 L7.6 3.4 M7.6 1.2 V3.4 H9.8"/><path d="M0.4 10.1 L3.4 7.1 M1.2 7.1 H3.4 V9.3"/><path d="M10.6 10.1 L7.6 7.1 M7.6 9.3 V7.1 H9.8"/></g></svg>

<!-- right toolbar -->
<div class="a" style="left:992px;top:150.8px;width:24px;height:416.5px;background:#e6e6e6;border:1px solid #dcdcdc;border-radius:2px"></div>
<svg style="left:997px;top:327px" width="14" height="13" viewBox="0 0 14 13"><path d="M0 6.5 H13.8 M6.9 0 V13" stroke="#222" stroke-width="3.9"/></svg>
<svg style="left:996.8px;top:351.5px" width="14" height="15" viewBox="0 0 14 15"><path d="M1.5 0.3 H10.8 L13.6 3.1 V13 Q13.6 14.5 12.1 14.5 H1.5 Q0.2 14.5 0.2 13 V1.8 Q0.2 0.3 1.5 0.3 Z" fill="#222"/><rect x="3" y="0.3" width="7.6" height="4.7" fill="#e6e6e6"/><rect x="7.6" y="1" width="2" height="3.2" fill="#222"/></svg>
<svg style="left:997px;top:377px" width="14" height="15" viewBox="0 0 14 15"><path d="M11.3 10.2 A5.6 5.6 0 1 1 10.6 3.6" fill="none" stroke="#222" stroke-width="2.2"/><path d="M8 0.6 L13.4 0.8 L13 6 Z" fill="#222"/></svg>

<!-- tabs -->
<div class="a" style="left:553.3px;top:198.4px;width:435.5px;height:369.2px;border:1px solid #a9b3b6"></div>
<div class="a" style="left:553.3px;top:184.4px;width:43px;height:15px;background:#fff;border-left:1px solid #a9b3b6;border-right:1px solid #b5bec2;border-top:1.6px solid #5cb85c"></div>
<div class="t" style="left:557px;top:187.5px;font-size:8.15px;color:#666">Avaliação</div>
<div class="a" style="left:596.3px;top:185.5px;width:30.5px;height:13px;background:linear-gradient(#fbfbfb,#e9e9e9);border:1px solid #bcc4c8;border-left:none;border-bottom:none"></div>
<div class="t" style="left:599.8px;top:188px;font-size:7.9px;color:#555">Anexo</div>
<div class="a" style="left:627.2px;top:185.5px;width:49.5px;height:13px;background:linear-gradient(#fbfbfb,#e9e9e9);border:1px solid #bcc4c8;border-bottom:none"></div>
<div class="t" style="left:631.5px;top:188px;font-size:8.1px;color:#555">Documento</div>

<!-- Real row -->
<svg style="left:556.5px;top:210.5px" width="12" height="14" viewBox="0 0 12 14"><circle cx="4.8" cy="8.8" r="3.9" fill="none" stroke="#111" stroke-width="1.5"/><path d="M7 6 L8.6 3.6" stroke="#111" stroke-width="1.4"/><path d="M8.5 0.6 V4.8 M6.4 2.6 H10.6" stroke="#333" stroke-width="0.7"/></svg>
<div class="t" style="left:572px;top:214px;font-size:8.1px;color:#444">Real</div>
<div class="a" style="left:634.2px;top:210.8px;width:193.7px;height:14.6px;background:#ff0000;border:1px solid #a8b6d4"></div>
<div class="t" style="left:638.75px;top:214px;font-size:9.6px;color:#fff">Alto</div>
<svg style="left:830.5px;top:211.5px" width="13" height="12" viewBox="0 0 13 12"><path d="M6.2 1 L11.8 10.8 H0.8 Z" fill="#d03c0b" stroke="#d03c0b" stroke-width="1.4" stroke-linejoin="round"/></svg>
<!-- checkbox -->
<div class="a" style="left:557px;top:237px;width:9px;height:9px;border:1px solid #d0d0d0;border-radius:1.5px;background:#f2f2f2"></div>
<svg style="left:558.5px;top:238.5px" width="6" height="6" viewBox="0 0 6 6"><path d="M0.6 3.2 L2.3 4.9 L5.4 0.8" fill="none" stroke="#8c8c8c" stroke-width="1.4"/></svg>
<div class="t" style="left:572px;top:238px;font-size:8.25px;color:#444">Significativo</div>
<svg style="left:973px;top:236px" width="12.5" height="12.5" viewBox="0 0 12 12"><circle cx="6" cy="6" r="6" fill="#3b7bbf"/><circle cx="6" cy="3.2" r="1.1" fill="#fff"/><rect x="5" y="5" width="2" height="4.8" fill="#fff"/></svg>

<!-- matrix -->
<div class="t" style="left:736px;top:259.5px;font-size:9.6px;color:#333;-webkit-text-stroke:0.3px #333;transform:none">Probabilidade</div>
<div class="t" style="left:556px;top:341.8px;font-size:9.5px;font-weight:bold;color:#222;transform:rotate(-90deg);transform-origin:0 0">Impacto</div>
<div class="a" style="left:573.8px;top:273.1px;width:383px;height:106.3px;background:#e8e2e2"></div>
<!-- header cells -->
<div class="a" style="left:574.5px;top:273.6px;width:34px;height:24px;background:#efefef"></div>
<div class="a" style="left:609.6px;top:273.6px;width:114px;height:24px;background:#efefef"></div>
<div class="a" style="left:724.6px;top:273.6px;width:115.6px;height:24px;background:#efefef"></div>
<div class="a" style="left:841px;top:273.6px;width:115.2px;height:24px;background:#efefef"></div>
<div class="t" style="left:654.8px;top:282px;font-size:8.55px;color:#222;-webkit-text-stroke:0.3px #222">Baixa</div>
<div class="t" style="left:770px;top:282px;font-size:8.55px;color:#222;-webkit-text-stroke:0.3px #222">Média</div>
<div class="t" style="left:889px;top:282px;font-size:8.55px;color:#222;-webkit-text-stroke:0.3px #222">Alta</div>
<!-- row headers -->
<div class="a" style="left:574.5px;top:298.6px;width:34px;height:31px;background:#efefef"></div>
<div class="a" style="left:574.5px;top:330.6px;width:34px;height:24.7px;background:#efefef"></div>
<div class="a" style="left:574.5px;top:356.3px;width:34px;height:22.6px;background:#efefef"></div>
<div class="t" style="left:578.8px;top:310.5px;font-size:8.4px;font-weight:bold;color:#333">Alto</div>
<div class="t" style="left:578.8px;top:339px;font-size:8.4px;font-weight:bold;color:#333">Médio</div>
<div class="t" style="left:578.8px;top:363.6px;font-size:8.4px;font-weight:bold;color:#333">Baixo</div>
<!-- cells -->
<div class="a" style="left:609.6px;top:298.6px;width:114px;height:31px;background:#ffff33"></div>
<div class="a" style="left:724.6px;top:298.6px;width:115.6px;height:31px;background:#ff0000"></div>
<div class="a" style="left:841px;top:298.6px;width:115.2px;height:31px;background:#ff0000"></div>
<div class="a" style="left:609.6px;top:330.6px;width:114px;height:24.7px;background:#33cc33"></div>
<div class="a" style="left:724.6px;top:330.6px;width:115.6px;height:24.7px;background:#ffff33"></div>
<div class="a" style="left:841px;top:330.6px;width:115.2px;height:24.7px;background:#ff0000"></div>
<div class="a" style="left:609.6px;top:356.3px;width:114px;height:22.6px;background:#33cc33"></div>
<div class="a" style="left:724.6px;top:356.3px;width:115.6px;height:22.6px;background:#33cc33"></div>
<div class="a" style="left:841px;top:356.3px;width:115.2px;height:22.6px;background:#ffff33"></div>
<!-- pill -->
<div class="a" style="left:767.8px;top:303.5px;width:29.2px;height:20.4px;background:#fff;border-radius:10.2px"></div>
<svg style="left:774px;top:306.5px" width="17" height="13" viewBox="0 0 17 13"><circle cx="5" cy="8" r="3.6" fill="none" stroke="#111" stroke-width="1.1"/><path d="M7.2 5.4 L8.4 3.6" stroke="#111" stroke-width="1.1"/><path d="M8.4 0.6 V4.2 M6.6 2.2 H10.4" stroke="#333" stroke-width="0.6"/><rect x="14.6" y="4.6" width="1.3" height="5.8" fill="#222"/></svg>

<!-- Real / Justificativa tabs -->
<div class="a" style="left:557.6px;top:411.5px;width:428px;height:1px;background:#ddd"></div>
<div class="a" style="left:557.6px;top:383.2px;width:35.6px;height:29px;background:#fff;border:1px solid #ddd;border-top:1.5px solid #3d8ad0;border-bottom:none;border-radius:3px 3px 0 0"></div>
<div class="t" style="left:565.2px;top:392.5px;font-size:9.7px;color:#3d8ad0">Real</div>
<div class="a" style="left:593.4px;top:383.5px;width:67px;height:28px;background:#efefef;border:1px solid #e0e0e0;border-bottom:none;border-radius:3px 3px 0 0"></div>
<div class="t" style="left:601.7px;top:392.5px;font-size:9.7px;color:#555">Justificativa</div>

<!-- criterio table -->
<div class="a" style="left:558.2px;top:420.1px;width:427.3px;height:144.5px;border:1px solid #d8d8d8;border-radius:3px;background:#fff"></div>
<div class="a" style="left:559px;top:421px;width:425.7px;height:18.4px;background:#e8e8e8;border-radius:2px 2px 0 0"></div>
<div class="a" style="left:559px;top:469.4px;width:425.7px;height:29.3px;background:#eeeeee"></div>
<div class="a" style="left:559px;top:498.7px;width:425.7px;height:1px;background:#e4e4e4"></div>
<div class="a" style="left:806.3px;top:421px;width:1px;height:77.7px;background:#e2e2e2"></div>
<div class="t" style="left:562.5px;top:425.5px;font-size:9.8px;color:#3a3a3a">Critério</div>
<div class="t" style="left:811.5px;top:425.5px;font-size:9.55px;color:#3a3a3a">Resultado</div>
<div class="t" style="left:562.5px;top:451px;font-size:9px;color:#666">Probabilidade</div>
<div class="t" style="left:562.5px;top:480.5px;font-size:9px;color:#666">Impacto</div>
<div class="a" style="left:811.1px;top:447.2px;width:167px;height:14.7px;border:1px solid #9fb5cc;background:#fff"></div>
<div class="t" style="left:815px;top:450.5px;font-size:9.5px;color:#333">Média</div>
<svg style="left:968.7px;top:452.5px" width="5" height="4.5" viewBox="0 0 5 4.5"><path d="M0 0 H5 L2.5 4.5Z" fill="#111"/></svg>
<div class="a" style="left:811.1px;top:476.5px;width:167px;height:14.7px;border:1px solid #9fb5cc;background:#fff"></div>
<div class="t" style="left:815px;top:479.8px;font-size:9.5px;color:#333">Alto</div>
<svg style="left:968.7px;top:481.8px" width="5" height="4.5" viewBox="0 0 5 4.5"><path d="M0 0 H5 L2.5 4.5Z" fill="#111"/></svg>

<div class="a" style="left:544px;top:574.5px;width:480px;height:1.5px;background:#e4e4e4"></div>
<!-- PANEL_END -->

</body></html>
